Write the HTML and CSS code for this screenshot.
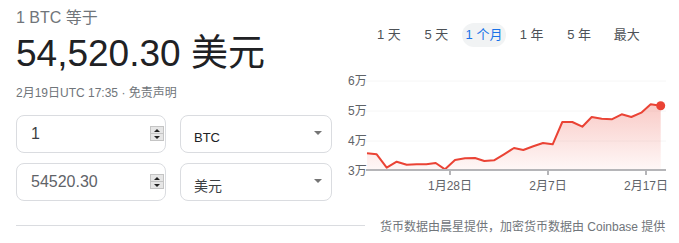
FILE: index.html
```html
<!DOCTYPE html>
<html lang="zh-CN">
<head>
  <meta charset="UTF-8">
  <meta name="viewport" content="width=device-width, initial-scale=1.0">
  <title>BTC 换算</title>
  <link rel="stylesheet" href="styles.css">
</head>
<body>
  <div class="page">
    <div class="main">
      <div class="left">
        <div class="rate-label">1 BTC 等于</div>
        <div class="rate-value">54,520.30 美元</div>
        <div class="rate-date">2月19日UTC 17:35 · <span class="disclaimer">免责声明</span></div>

        <div class="converter">
          <div class="amount-box">
            <span class="amount">1</span>
            <span class="spinner"><i class="up"></i><i class="down"></i></span>
          </div>
          <div class="currency-box">
            <span class="currency latin">BTC</span>
            <span class="caret"></span>
          </div>
          <div class="amount-box">
            <span class="amount muted">54520.30</span>
            <span class="spinner"><i class="up"></i><i class="down"></i></span>
          </div>
          <div class="currency-box">
            <span class="currency">美元</span>
            <span class="caret"></span>
          </div>
        </div>
      </div>

      <div class="right">
        <div class="tabs">
          <div class="tab"><span>1 天</span></div>
          <div class="tab"><span>5 天</span></div>
          <div class="tab active"><span>1 个月</span></div>
          <div class="tab"><span>1 年</span></div>
          <div class="tab"><span>5 年</span></div>
          <div class="tab"><span>最大</span></div>
        </div>

        <!-- chart uses page coordinates in its viewBox -->
        <svg class="chart" width="330" height="126" viewBox="345 68 330 126">
          <defs>
            <linearGradient id="fill" x1="0" y1="0" x2="0" y2="1">
              <stop offset="0" stop-color="#ea4335" stop-opacity="0.28"/>
              <stop offset="1" stop-color="#ea4335" stop-opacity="0.04"/>
            </linearGradient>
          </defs>
          <g class="grid">
            <line x1="367" y1="81" x2="667" y2="81"/>
            <line x1="367" y1="111" x2="667" y2="111"/>
            <line x1="367" y1="141" x2="667" y2="141"/>
          </g>
          <path fill="url(#fill)" d="M368,153.3 L377.7,154.3 L387.7,167.7 L397.7,161.7 L407.7,164.7 L417.7,164.3 L427.3,164.3 L436.7,163 L446,169.3 L456,160 L466,158.3 L476,158 L485.3,161 L495,160.3 L505,154.3 L515,148 L524.3,150 L534.3,146.3 L544,143 L553.7,144.3 L563.3,122 L573.3,122 L583.3,126.7 L592.7,117 L602.7,118.7 L612.7,119.3 L622.7,114.3 L632.3,117 L642.3,112.7 L651.7,104.3 L661.7,105.7 L661.7,170 L368,170 Z"/>
          <path class="line" d="M368,153.3 L377.7,154.3 L387.7,167.7 L397.7,161.7 L407.7,164.7 L417.7,164.3 L427.3,164.3 L436.7,163 L446,169.3 L456,160 L466,158.3 L476,158 L485.3,161 L495,160.3 L505,154.3 L515,148 L524.3,150 L534.3,146.3 L544,143 L553.7,144.3 L563.3,122 L573.3,122 L583.3,126.7 L592.7,117 L602.7,118.7 L612.7,119.3 L622.7,114.3 L632.3,117 L642.3,112.7 L651.7,104.3 L661.7,105.7"/>
          <circle cx="661.7" cy="105.7" r="4.5" fill="#ea4335"/>
          <g class="axis">
            <line x1="367" y1="170" x2="667" y2="170"/>
            <line x1="451" y1="170" x2="451" y2="175"/>
            <line x1="549" y1="170" x2="549" y2="175"/>
            <line x1="647" y1="170" x2="647" y2="175"/>
          </g>
          <g class="ylabels">
            <text x="349" y="85">6万</text>
            <text x="349" y="115">5万</text>
            <text x="349" y="145">4万</text>
            <text x="349" y="175">3万</text>
          </g>
          <g class="xlabels">
            <text x="451" y="190">1月28日</text>
            <text x="549" y="190">2月7日</text>
            <text x="647" y="190">2月17日</text>
          </g>
        </svg>
      </div>
    </div>

    <div class="footer">
      <div class="rule"></div>
      <div class="source">货币数据由晨星提供，加密货币数据由 Coinbase 提供</div>
    </div>
  </div>
</body>
</html>
```

FILE: styles.css
```css
body {
  margin: 0;
  font-family: "Liberation Sans", Arial, "Noto Sans CJK SC", sans-serif;
  color: #202124;
  background: #fff;
}
.page {
  padding: 8px 12px 0 16px;
}
.main {
  display: flex;
}
.left {
  width: 317px;
}
.rate-label {
  font-size: 16px;
  line-height: 20px;
  color: #70757a;
}
.rate-value {
  font-size: 37px;
  line-height: 52px;
  color: #202124;
}
.rate-date {
  font-size: 12px;
  line-height: 18px;
  color: #70757a;
  margin-top: 4px;
}
.converter {
  display: grid;
  grid-template-columns: 150px 152px;
  grid-auto-rows: 38px;
  column-gap: 14px;
  row-gap: 10px;
  margin-top: 13px;
}
.amount-box,
.currency-box {
  box-sizing: border-box;
  border: 1px solid #dadce0;
  border-radius: 8px;
  display: flex;
  align-items: center;
  position: relative;
}
.amount-box {
  padding: 0 0 0 14px;
}
.amount {
  font-size: 16px;
  color: #3c4043;
}
.amount.muted {
  color: #5f6368;
}
.spinner {
  position: absolute;
  right: 1px;
  top: 10px;
  width: 14px;
  height: 15px;
  display: flex;
  flex-direction: column;
  border: 1px solid #c4c4c4;
  box-sizing: border-box;
  background: #e6e6e6;
}
.spinner i {
  flex: 1;
  position: relative;
}
.spinner i.up {
  border-bottom: 1px solid #c4c4c4;
}
.spinner i::after {
  content: "";
  position: absolute;
  left: 3px;
  border-left: 3px solid transparent;
  border-right: 3px solid transparent;
}
.spinner i.up::after {
  top: 2px;
  border-bottom: 3px solid #222;
}
.spinner i.down::after {
  top: 2px;
  border-top: 3px solid #222;
}
.currency-box {
  padding: 0 9px 0 13px;
  justify-content: space-between;
}
.currency {
  font-size: 14px;
  color: #3c4043;
  margin-top: 6px;
}
.currency.latin {
  font-size: 13px;
  color: #202124;
}
.caret {
  width: 0;
  height: 0;
  border-left: 4px solid transparent;
  border-right: 4px solid transparent;
  border-top: 4px solid #757575;
  margin-top: -2px;
}
.right {
  margin-left: 12px;
  flex: 1;
}
.tabs {
  display: flex;
  margin: 15px 0 0 21px;
}
.tab {
  width: 47.6px;
  text-align: center;
  font-size: 13px;
  color: #4d5156;
}
.tab span {
  display: inline-block;
  height: 24px;
  line-height: 24px;
  padding: 0 4px;
  border-radius: 12px;
}
.tab.active span {
  background: #f1f3f4;
  color: #1a73e8;
}
.chart {
  display: block;
  margin-top: 21px;
}
.grid line {
  stroke: #f6f6f6;
  stroke-width: 1;
}
.line {
  fill: none;
  stroke: #ea4335;
  stroke-width: 2;
  stroke-linejoin: round;
}
.axis line {
  stroke: #b5b5b8;
  stroke-width: 2;
}
.ylabels text,
.xlabels text {
  font-size: 12px;
  fill: #5f6368;
}
.xlabels text {
  text-anchor: middle;
}
.footer {
  display: flex;
  align-items: center;
  margin-top: 16px;
}
.rule {
  width: 349px;
  border-top: 1px solid #dadce0;
}
.source {
  margin-left: 15px;
  font-size: 12px;
  color: #70757a;
}
```
